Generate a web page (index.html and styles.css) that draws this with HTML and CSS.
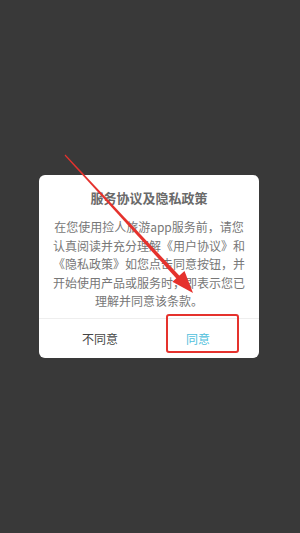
FILE: index.html
```html
<!DOCTYPE html>
<html lang="zh">
<head>
<meta charset="utf-8">
<link rel="stylesheet" href="styles.css">
</head>
<body>
<div class="screen">
  <div class="dialog">
    <div class="title">服务协议及隐私政策</div>
    <div class="content">在您使用捡人旅游app服务前，请您<br>认真阅读并充分理解《用户协议》和<br>《隐私政策》如您点击同意按钮，并<br>开始使用产品或服务时，即表示您已<br>理解并同意该条款。</div>
    <div class="actions">
      <div class="btn btn-cancel">不同意</div>
      <div class="btn btn-ok">同意</div>
    </div>
  </div>
  <svg class="annot" width="300" height="533" viewBox="0 0 300 533">
    <polygon points="64.6,155.4 65.4,154.6 183.5,280.1 180.5,282.9" fill="#e5322d"/>
    <polygon points="193,293 172.4,281.7 184.5,271.1" fill="#e5322d"/>
    <rect x="167" y="315" width="71" height="37" rx="2" fill="none" stroke="#e5322d" stroke-width="2"/>
  </svg>
</div>
</body>
</html>
```
FILE: styles.css
```css
html, body {
  margin: 0;
  padding: 0;
}
body {
  width: 300px;
  height: 533px;
  background: #393939;
  font-family: "Noto Sans CJK SC", "Noto Sans", sans-serif;
}
.screen {
  position: relative;
  width: 300px;
  height: 533px;
  display: flex;
  align-items: center;
  justify-content: center;
}
.dialog {
  width: 220px;
  background: #fff;
  border-radius: 6px;
  display: flex;
  flex-direction: column;
  margin-left: -2px;
}
.title {
  padding-top: 13px;
  text-align: center;
  font-size: 13px;
  line-height: 20px;
  font-weight: 700;
  color: #6a6a6a;
}
.content {
  margin-top: 10px;
  padding: 0 8px 7px;
  text-align: center;
  font-size: 12px;
  line-height: 18.4px;
  color: #777;
  white-space: nowrap;
}
.actions {
  border-top: 1px solid #eeeeee;
  display: grid;
  grid-template-columns: 1fr 1fr;
  padding: 0 12px;
  height: 39px;
}
.btn {
  display: flex;
  align-items: center;
  justify-content: center;
  font-size: 12px;
}
.btn-cancel {
  color: #444;
}
.btn-ok {
  color: #4fc0dc;
}
.annot {
  position: absolute;
  left: 0;
  top: 0;
}
```
